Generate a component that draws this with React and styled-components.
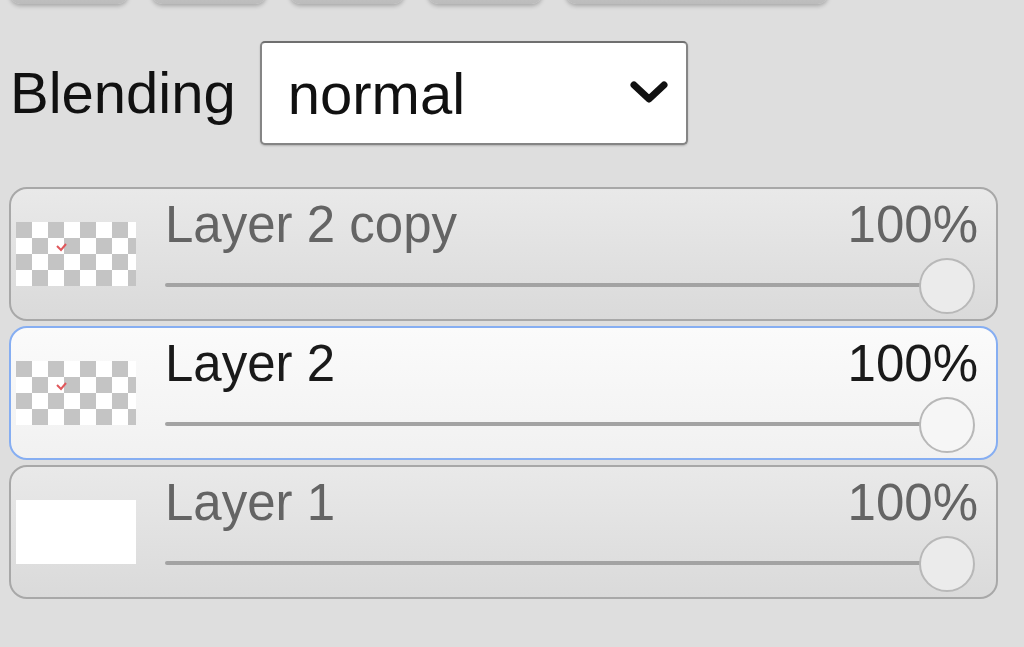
import React from "react";
import styled, { createGlobalStyle } from "styled-components";

const Global = createGlobalStyle`
  html, body { margin: 0; padding: 0; background: #dedede; }
  body { font-family: "Liberation Sans", Arial, sans-serif; overflow: hidden; }
`;

const Panel = styled.div`
  width: 1024px;
  height: 647px;
  background: #dedede;
  padding-left: 9px;
  box-sizing: border-box;
  display: flex;
  flex-direction: column;
`;

const ToolRow = styled.div`
  display: flex;
  gap: 24px;
  margin-top: -38px;
  padding-left: 1px;
`;

const ToolButton = styled.div`
  width: ${(p) => p.$w}px;
  height: 42px;
  border-radius: 10px;
  background: linear-gradient(#d2d2d2, #bcbcbc);
  box-shadow: 0 2px 4px rgba(0, 0, 0, 0.25);
`;

const BlendRow = styled.div`
  display: flex;
  align-items: center;
  gap: 24px;
  margin-top: 37px;
  padding-left: 1px;
`;

const Label = styled.span`
  font-size: 58px;
  color: #111;
  line-height: 1;
`;

const Select = styled.div`
  width: 428px;
  height: 104px;
  box-sizing: border-box;
  background: #fff;
  border: 2px solid #858585;
  border-top-color: #6f6f6f;
  border-radius: 5px;
  box-shadow: 0 1px 2px rgba(0, 0, 0, 0.2);
  display: flex;
  align-items: center;
  justify-content: space-between;
  padding: 0 18px 0 26px;
  font-size: 58px;
  color: #111;
`;

const Layers = styled.div`
  display: flex;
  flex-direction: column;
  gap: 5px;
  margin-top: 42px;
  width: 989px;
`;

const Card = styled.div`
  height: 134px;
  box-sizing: border-box;
  border: 2px solid ${(p) => (p.$active ? "#86aef2" : "#a8a8a8")};
  border-radius: 18px;
  background: ${(p) =>
    p.$active
      ? "linear-gradient(#fbfbfb, #f1f1f1)"
      : "linear-gradient(#e9e9e9, #dadada)"};
  display: grid;
  grid-template-columns: 120px 1fr;
  column-gap: 29px;
  align-items: center;
  padding: 0 18px 0 5px;
`;

const Thumb = styled.div`
  position: relative;
  width: 120px;
  height: 64px;
  background: ${(p) =>
    p.$blank
      ? "#ffffff"
      : "repeating-conic-gradient(#ffffff 0 25%, #c4c4c4 0 50%) 0 0 / 32px 32px"};
`;

const Mark = styled.svg`
  position: absolute;
  left: 40px;
  top: 20px;
`;

const Body = styled.div`
  align-self: start;
  padding-top: 10px;
  display: flex;
  flex-direction: column;
`;

const TopLine = styled.div`
  display: flex;
  justify-content: space-between;
  font-size: 51px;
  line-height: 51px;
  color: ${(p) => (p.$active ? "#1a1a1a" : "#646464")};
`;

const Slider = styled.div`
  position: relative;
  height: 55px;
  margin-top: 8px;
  margin-right: 3px;
  &::before {
    content: "";
    position: absolute;
    left: 0;
    right: 20px;
    top: 25px;
    height: 4px;
    border-radius: 2px;
    background: #a3a3a3;
  }
`;

const Knob = styled.div`
  position: absolute;
  right: 0;
  top: 0;
  width: 56px;
  height: 56px;
  box-sizing: border-box;
  border-radius: 50%;
  border: 2px solid #b8b8b8;
  background: ${(p) => (p.$active ? "#f6f6f6" : "#ebebeb")};
`;

const layers = [
  { name: "Layer 2 copy", pct: "100%", active: false, blank: false },
  { name: "Layer 2", pct: "100%", active: true, blank: false },
  { name: "Layer 1", pct: "100%", active: false, blank: true },
];

export default function App() {
  return (
    <>
      <Global />
      <Panel>
        <ToolRow>
          <ToolButton $w={118} />
          <ToolButton $w={114} />
          <ToolButton $w={114} />
          <ToolButton $w={114} />
          <ToolButton $w={262} />
        </ToolRow>
        <BlendRow>
          <Label>Blending</Label>
          <Select>
            <span>normal</span>
            <svg width="38" height="26" viewBox="0 0 38 26">
              <polyline
                points="4,5 19,19 34,5"
                fill="none"
                stroke="#111"
                strokeWidth="7"
                strokeLinecap="round"
                strokeLinejoin="round"
              />
            </svg>
          </Select>
        </BlendRow>
        <Layers>
          {layers.map((l) => (
            <Card key={l.name} $active={l.active}>
              <Thumb $blank={l.blank}>
                {!l.blank && (
                  <Mark width="12" height="10" viewBox="0 0 12 10">
                    <polyline
                      points="1,4 5,8 10,2"
                      fill="none"
                      stroke="#e0575b"
                      strokeWidth="2"
                    />
                  </Mark>
                )}
              </Thumb>
              <Body>
                <TopLine $active={l.active}>
                  <span>{l.name}</span>
                  <span>{l.pct}</span>
                </TopLine>
                <Slider>
                  <Knob $active={l.active} />
                </Slider>
              </Body>
            </Card>
          ))}
        </Layers>
      </Panel>
    </>
  );
}
